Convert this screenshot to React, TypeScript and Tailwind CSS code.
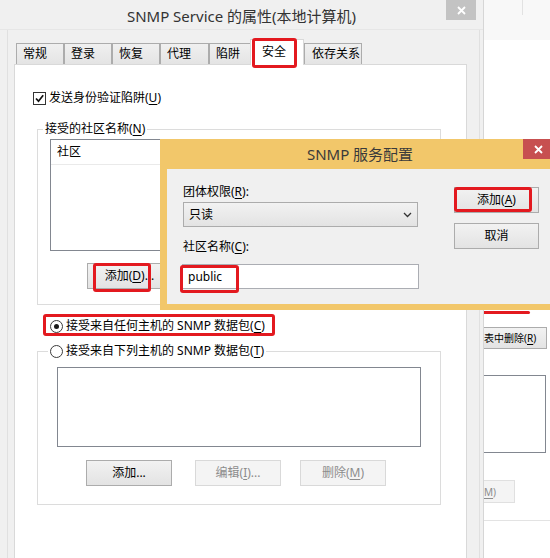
import type { ReactNode } from "react";

type ButtonProps = {
	children: ReactNode;
	disabled?: boolean;
	className?: string;
};

function WinButton({ children, disabled, className = "" }: ButtonProps) {
	const tone = disabled
		? "border-[#d9d9d9] bg-[#f4f4f4] text-[#8c8c8c]"
		: "border-[#acacac] bg-linear-to-b from-[#f2f2f2] to-[#e3e3e3] text-black";
	return (
		<div
			className={`relative flex h-[26px] items-center justify-center border ${tone} ${className}`}
		>
			{children}
		</div>
	);
}

function RedBox({ className }: { className: string }) {
	return (
		<div
			className={`pointer-events-none absolute rounded-[3px] border-[3px] border-[#e3191f] ${className}`}
		/>
	);
}

function Key({ children }: { children: ReactNode }) {
	return <span className="underline underline-offset-2">{children}</span>;
}

function CloseGlyph() {
	return (
		<svg width="9" height="9" viewBox="0 0 9 9">
			<path d="M1 1 L8 8 M8 1 L1 8" stroke="#fff" strokeWidth="1.8" />
		</svg>
	);
}

function Radio({ checked }: { checked?: boolean }) {
	return (
		<div className="flex size-[13px] shrink-0 items-center justify-center rounded-full border border-[#3c3c3c] bg-white">
			{checked && <div className="size-[5px] rounded-full bg-[#1a1a1a]" />}
		</div>
	);
}

const tabs = [
	{ label: "常规", w: "w-[48px]" },
	{ label: "登录", w: "w-[48px]" },
	{ label: "恢复", w: "w-[48px]" },
	{ label: "代理", w: "w-[49px]" },
	{ label: "陷阱", w: "w-[43px]" },
];

function BackWindow() {
	return (
		<div className="absolute left-[484px] top-0 flex h-full w-[66px] flex-col overflow-hidden bg-white">
			<div className="h-[40px] bg-[#f8f8f8]">
				<div className="ml-[38px] h-[15px] w-px bg-[#e2e2e2]" />
			</div>
			<div className="mt-[271px] h-[3px] w-[46px] rounded-r-[2px] bg-[#e3191f]" />
			<div className="mt-[13px] flex h-[22px] w-[63px] items-center border border-l-0 border-[#acacac] bg-linear-to-b from-[#f2f2f2] to-[#e3e3e3] text-[10px] whitespace-nowrap">
				表中删除(<Key>R</Key>)
			</div>
			<div className="mt-[26px] h-[78px] w-[62px] border border-l-0 border-[#828790]" />
			<div className="mt-[27px] flex h-[23px] w-[31px] items-center border border-l-0 border-[#e0e0e0] bg-[#f4f4f4] text-[10px] text-[#8c8c8c]">
				<Key>M</Key>)
			</div>
			<div className="mt-[17px] h-px w-full bg-[#e3e3e3]" />
		</div>
	);
}

function PropertiesDialog() {
	return (
		<div className="absolute left-0 top-0 flex h-[600px] w-[484px] flex-col border-r border-[#d6d6d6] bg-[#f0f0f0]">
			<div className="relative flex h-[30px] items-center justify-center border-b border-[#e6e6e6] pt-[2px] text-[15px] leading-[20px] text-[#333]">
				SNMP Service 的属性(本地计算机)
				<div className="absolute right-[7px] top-0 flex h-[20px] w-[30px] items-center justify-center bg-[#c3c3c3]">
					<CloseGlyph />
				</div>
			</div>

			<div className="ml-[7px] mr-[3px] flex flex-1 flex-col border-x border-[#e0e0e0] pl-[6px] pr-[12px]">
				<div className="mt-[9px] flex h-[25px] items-end pl-[2px]">
					{tabs.map((tab) => (
						<div
							key={tab.label}
							className={`flex h-[21px] ${tab.w} items-center border border-b-0 border-[#acacac] bg-linear-to-b from-[#f0f0f0] to-[#e4e4e4] pl-[6px]`}
						>
							{tab.label}
						</div>
					))}
					<div className="relative z-10 -mb-px -ml-[2px] flex h-[26px] w-[54px] items-center border border-b-0 border-[#d9d9d9] bg-white pb-[2px] pl-[11px]">
						安全
						<RedBox className="-top-[2px] left-[1px] h-[30px] w-[45px]" />
					</div>
					<div className="flex h-[21px] w-[58px] items-center border border-b-0 border-[#acacac] bg-linear-to-b from-[#f0f0f0] to-[#e4e4e4] pl-[7px]">
						依存关系
					</div>
				</div>

				<div className="flex flex-1 flex-col border border-[#d9d9d9] bg-white">
					<div className="ml-[18px] mt-[25px] flex h-[16px] items-center gap-[3px]">
						<div className="flex size-[13px] items-center justify-center border border-[#333] bg-white">
							<svg width="11" height="11" viewBox="0 0 11 11">
								<path
									d="M2 5.5 L4.5 8.2 L9.2 2.2"
									fill="none"
									stroke="#111"
									strokeWidth="1.7"
								/>
							</svg>
						</div>
						<span>
							发送身份验证陷阱(<Key>U</Key>)
						</span>
					</div>

					<fieldset className="ml-[22px] mt-[15px] flex h-[184px] w-[404px] flex-col border border-[#dcdcdc]">
						<legend className="ml-[5px] px-[2px] leading-[16px]">
							接受的社区名称(<Key>N</Key>)
						</legend>
						<div className="ml-[12px] mt-[2px] h-[112px] w-[375px] border border-[#828790]">
							<div className="flex h-[25px] items-center border-b border-[#eaeaea] pl-[6px]">
								社区
							</div>
						</div>
						<WinButton className="ml-[49px] mt-[12px] w-[85px]">
							添加(<Key>D</Key>)...
							<RedBox className="-top-px left-[5px] h-[29px] w-[58px]" />
						</WinButton>
					</fieldset>

					<div className="relative ml-[35px] mt-[13px] flex h-[16px] w-fit items-center gap-[3px]">
						<Radio checked />
						<span>
							接受来自任何主机的 SNMP 数据包(<Key>C</Key>)
						</span>
						<RedBox className="-left-[7px] -top-[4px] h-[22px] w-[232px]" />
					</div>

					<fieldset className="ml-[22px] mt-[9px] flex h-[162px] w-[404px] flex-col border border-[#dcdcdc]">
						<legend className="ml-[10px] flex items-center gap-[3px] px-[2px] leading-[16px]">
							<Radio />
							<span>
								接受来自下列主机的 SNMP 数据包(<Key>T</Key>)
							</span>
						</legend>
						<div className="ml-[19px] mt-[8px] h-[80px] w-[364px] border border-[#828790]" />
						<div className="mt-[13px] flex">
							<WinButton className="ml-[48px] w-[86px]">添加...</WinButton>
							<WinButton disabled className="ml-[23px] w-[86px]">
								编辑(<Key>I</Key>)...
							</WinButton>
							<WinButton disabled className="ml-[19px] w-[86px]">
								删除(<Key>M</Key>)
							</WinButton>
						</div>
					</fieldset>
				</div>
			</div>
		</div>
	);
}

function ConfigDialog() {
	return (
		<div className="absolute left-[160px] top-[139px] flex h-[171px] w-[400px] flex-col bg-[#f2c76a] px-[7px] pb-[6px]">
			<div className="relative flex h-[30px] items-center justify-center text-[15px] leading-[20px] text-[#3a3a3a]">
				SNMP 服务配置
				<div className="absolute right-0 top-0 flex h-[20px] w-[30px] items-center justify-center bg-[#c75050]">
					<CloseGlyph />
				</div>
			</div>
			<div className="flex flex-1 bg-[#f0f0f0] pl-[16px] pt-[15px]">
				<div className="flex w-[236px] flex-col">
					<span>
						团体权限(<Key>R</Key>):
					</span>
					<div className="mt-[2px] flex h-[25px] w-[235px] items-center justify-between border border-[#acacac] bg-linear-to-b from-[#f2f2f2] to-[#e3e3e3] pl-[5px] pr-[5px]">
						<span>只读</span>
						<svg width="9" height="6" viewBox="0 0 9 6">
							<path d="M1 1 L4.5 4.5 L8 1" fill="none" stroke="#333" strokeWidth="1.3" />
						</svg>
					</div>
					<span className="mt-[12px]">
						社区名称(<Key>C</Key>):
					</span>
					<div className="relative -ml-px mt-[9px] flex h-[25px] w-[237px] items-center border border-[#abadb3] bg-white pl-[5px]">
						public
						<RedBox className="-left-[3px] top-0 h-[28px] w-[59px]" />
					</div>
				</div>
				<div className="ml-[35px] flex flex-col pt-[3px]">
					<WinButton className="w-[85px] border-[#5ea0e6]">
						添加(<Key>A</Key>)
						<RedBox className="-left-px -top-px h-[25px] w-[78px]" />
					</WinButton>
					<WinButton className="mt-[10px] w-[85px]">取消</WinButton>
				</div>
			</div>
		</div>
	);
}

export default function App() {
	return (
		<div className="relative h-[558px] w-[550px] overflow-hidden bg-white font-['Noto_Sans','Noto_Sans_CJK_SC',sans-serif] text-[12px] leading-[16px] text-black">
			<BackWindow />
			<PropertiesDialog />
			<ConfigDialog />
		</div>
	);
}
